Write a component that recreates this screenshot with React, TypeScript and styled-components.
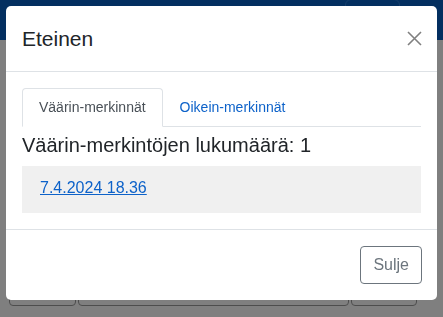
import React, { useState } from 'react';
import styled, { createGlobalStyle } from 'styled-components';

const GlobalStyle = createGlobalStyle`
    html, body {
        margin: 0;
        padding: 0;
        background: #ffffff;
        font-family: "Liberation Sans", Arial, sans-serif;
        color: #212529;
    }
    * {
        box-sizing: border-box;
    }
`;

const Page = styled.div`
    display: flex;
    flex-direction: column;
    height: 100vh;
    overflow: hidden;
`;

const NavBar = styled.div`
    height: 40px;
    background: #065ec0;
    display: flex;
    justify-content: flex-end;
    align-items: flex-start;
    padding-right: 43px;
`;

const NavButton = styled.div`
    width: 55px;
    height: 32px;
    margin-top: -1px;
    border: 1px solid #2a7bd6;
    border-radius: 6px;
`;

const BottomRow = styled.div`
    margin-top: auto;
    margin-bottom: 11px;
    padding-left: 9px;
    display: flex;
    gap: 2px;
`;

const PageButton = styled.div<{ w: number }>`
    width: ${(p) => p.w}px;
    height: 36px;
    border: 1px solid #9a9a9a;
    border-radius: 4px;
    background: #ffffff;
`;

const Backdrop = styled.div`
    position: fixed;
    inset: 0;
    background: rgba(0, 0, 0, 0.5);
    display: flex;
    justify-content: center;
    align-items: flex-start;
    padding-top: 6px;
`;

const Dialog = styled.div`
    width: 431px;
    background: #ffffff;
    border-radius: 5px;
    display: flex;
    flex-direction: column;
`;

const Header = styled.div`
    display: flex;
    align-items: center;
    justify-content: space-between;
    padding: 16px 15px 16px 16px;
    height: 66px;
    border-bottom: 1px solid #dee2e6;
`;

const Title = styled.h4`
    margin: 0;
    font-size: 21px;
    font-weight: 400;
    line-height: 1.5;
    color: #212529;
`;

const CloseButton = styled.button`
    border: none;
    background: transparent;
    padding: 0;
    width: 15px;
    height: 15px;
    display: flex;
    align-items: center;
    justify-content: center;
    cursor: pointer;
`;

const Body = styled.div`
    padding: 16px;
    border-bottom: 1px solid #dee2e6;
`;

const Tabs = styled.div`
    display: flex;
    border-bottom: 1px solid #dee2e6;
`;

const Tab = styled.button<{ active?: boolean }>`
    font-family: "Liberation Sans", Arial, sans-serif;
    font-size: 14px;
    line-height: 21px;
    padding: 8px 16px;
    margin-bottom: -1px;
    background: ${(p) => (p.active ? '#ffffff' : 'transparent')};
    color: ${(p) => (p.active ? '#495057' : '#0d62c9')};
    border: 1px solid ${(p) => (p.active ? '#dee2e6' : 'transparent')};
    border-bottom-color: ${(p) => (p.active ? '#ffffff' : 'transparent')};
    border-radius: 4px 4px 0 0;
    cursor: pointer;
`;

const CountHeading = styled.h5`
    margin: 3px 0 6px;
    font-size: 20px;
    font-weight: 400;
    line-height: 30px;
    color: #212529;
`;

const EntryBox = styled.div`
    background: #f0f0f0;
    padding: 10px 18px 13px;
`;

const EntryLink = styled.a`
    font-size: 16px;
    line-height: 24px;
    color: #0d62c9;
    text-decoration: underline;
`;

const Footer = styled.div`
    display: flex;
    justify-content: flex-end;
    padding: 16px 15px 16px 16px;
`;

const CloseAction = styled.button`
    font-family: "Liberation Sans", Arial, sans-serif;
    font-size: 16px;
    line-height: 24px;
    padding: 6px 12px;
    color: #6c757d;
    background: #ffffff;
    border: 1px solid #6c757d;
    border-radius: 4px;
    cursor: pointer;
`;

const App: React.FC = () => {
    const [tab, setTab] = useState<'wrong' | 'right'>('wrong');

    return (
        <>
            <GlobalStyle />
            <Page>
                <NavBar>
                    <NavButton />
                </NavBar>
                <BottomRow>
                    <PageButton w={67} />
                    <PageButton w={271} />
                    <PageButton w={66} />
                </BottomRow>
            </Page>
            <Backdrop>
                <Dialog>
                    <Header>
                        <Title>Eteinen</Title>
                        <CloseButton aria-label="Sulje">
                            <svg width="15" height="15" viewBox="0 0 15 15">
                                <path d="M1 1 L14 14 M14 1 L1 14" stroke="#808080" strokeWidth="1.6" fill="none" />
                            </svg>
                        </CloseButton>
                    </Header>
                    <Body>
                        <Tabs>
                            <Tab active={tab === 'wrong'} onClick={() => setTab('wrong')}>Väärin-merkinnät</Tab>
                            <Tab active={tab === 'right'} onClick={() => setTab('right')}>Oikein-merkinnät</Tab>
                        </Tabs>
                        <CountHeading>Väärin-merkintöjen lukumäärä: 1</CountHeading>
                        <EntryBox>
                            <EntryLink href="#">7.4.2024 18.36</EntryLink>
                        </EntryBox>
                    </Body>
                    <Footer>
                        <CloseAction>Sulje</CloseAction>
                    </Footer>
                </Dialog>
            </Backdrop>
        </>
    );
};

export default App;
